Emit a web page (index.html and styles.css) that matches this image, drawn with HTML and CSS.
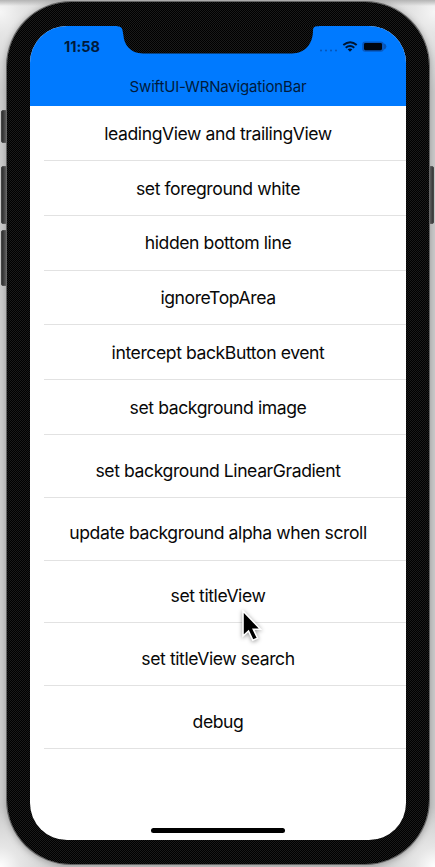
FILE: index.html
```html
<!DOCTYPE html>
<html lang="en">
<head>
<meta charset="utf-8">
<title>SwiftUI-WRNavigationBar</title>
<link rel="stylesheet" href="styles.css">
</head>
<body>
<i class="key mute"></i><i class="key up"></i><i class="key down"></i><i class="key power"></i>
<div class="phone">
  <main class="screen">
    <header class="nav">
      <div class="status">
        <span class="time">11:58</span>
        <svg class="signals" width="70" height="16" viewBox="0 0 70 16">
          <g fill="#0754b5"><circle cx="2" cy="12.5" r="1"/><circle cx="7" cy="12.5" r="1"/><circle cx="12" cy="12.5" r="1"/><circle cx="17" cy="12.5" r="1"/></g>
          <g fill="none" stroke="#001530" stroke-width="2"><path d="M24.3 7q7-5.6 13.4 0M26.7 9.7q4.3-3.4 8.6 0"/></g>
          <path fill="#001530" d="M28.6 11.3q2.4-1.6 4.8 0L31 13.8z"/>
          <rect x="43.2" y="3.4" width="21.6" height="10.4" rx="3" fill="#0758c0"/>
          <rect x="45" y="5" width="18" height="7.200" rx="1.4" fill="#000610"/>
          <path fill="#0754b5" d="M64.800 5.300q2.600.8 2.600 3.200t-2.600 3.200z"/>
        </svg>
      </div>
      <h1><span>SwiftUI-WRNavigationBar</span></h1>
      <svg class="notch" width="202" height="28" viewBox="0 0 202 28"><path fill="url(#mesh)" d="M0 0h202v.3h-2q-4 0-4 4C196 18 188 27.500 175 27.500H26C13 27.500 7 18 6.500 10Q6 7 5.500 4.300 5 .3 0 .3z"/><defs><pattern id="mesh" width="2" height="2" patternUnits="userSpaceOnUse"><path fill="#000" d="M0 0h2v2H0z"/><path fill="#1a1a1a" d="M0 0h1v1H0zM1 1h1v1H1z"/></pattern></defs></svg>
    </header>
    <ul class="list">
      <li>leadingView and trailingView</li>
      <li>set foreground white</li>
      <li>hidden bottom line</li>
      <li>ignoreTopArea</li>
      <li>intercept backButton event</li>
      <li>set background image</li>
      <li class="tall">set background LinearGradient</li>
      <li class="tall">update background alpha when scroll</li>
      <li class="tall">set titleView</li>
      <li class="tall">set titleView search</li>
      <li class="tall">debug</li>
    </ul>
    <div class="home"></div>
  </main>
</div>
<svg class="cursor" width="28" height="38" viewBox="0 0 28 38"><path d="M4 1v25l5.500-5 4.300 9.200 4.800-2-4.300-9h7.200z" fill="#000" stroke="#fff" stroke-width="1.600"/></svg>
</body>
</html>
```
FILE: styles.css
```css
* { box-sizing: border-box; }
body {
  margin: 0;
  width: 435px;
  height: 867px;
  overflow: hidden;
  position: relative;
  padding: 2px 6px 3px 7px;
  font-family: Inter, "Liberation Sans", sans-serif;
  background:
    linear-gradient(#b4b4b4, transparent 6px),
    radial-gradient(circle at 0 12px, #f6f6f6 0, #e6e6e6 20px, transparent 80px),
    radial-gradient(circle at 100% 12px, #f6f6f6 0, #e6e6e6 20px, transparent 80px),
    radial-gradient(circle at 0 100%, #fff 0, #e6e6e6 20px, transparent 60px),
    radial-gradient(circle at 100% 100%, #fff 0, #e6e6e6 20px, transparent 60px),
    #cacaca;
}
.phone {
  height: 862px;
  padding: 24px 23px;
  border-radius: 64px;
  background: repeating-conic-gradient(#1a1a1a 0 25%, #000 0 50%) 0 0 / 2px 2px;
  box-shadow: 0 0 0 1px #666, 0 1px 6px 1px #999;
  position: relative;
}
.screen {
  width: 376px;
  height: 814px;
  border-radius: 37px;
  overflow: hidden;
  background: #fff;
  display: flex;
  flex-direction: column;
}
.nav {
  flex: none;
  height: 80px;
  background: #007aff;
  position: relative;
}
.notch { position: absolute; left: 87px; top: 0; }
.status {
  height: 41px;
  padding: 0 17px 0 34px;
  display: flex;
  justify-content: space-between;
  align-items: center;
  color: #001a3c;
}
.time { font-size: 14.5px; font-weight: 700; letter-spacing: -.05px; }
.signals { margin-top: -1px; }
.nav h1 {
  margin: 0;
  font-size: 15px;
  line-height: 40px;
  font-weight: 400;
  text-align: center;
  color: #001a3c;
  letter-spacing: -.17px;
}
.list { flex: 1; margin: 0; padding: 0 0 0 14px; list-style: none; }
.list li {
  height: 54.85px;
  padding: .6px 14px 0 0;
  border-bottom: 1px solid #e2e2e2;
  display: flex;
  align-items: center;
  justify-content: center;
  font-size: 17.6px;
  letter-spacing: -.42px;
  color: #080808;
  white-space: nowrap;
}
.list .tall { height: 62.8px; padding-top: 8.3px; }
.home { flex: none; width: 134px; height: 5px; border-radius: 3px; background: #000; margin: 0 auto 7px 121px; }
.key { position: absolute; width: 7px; background: #242424; border: 1px solid #3b3b3b; border-radius: 2px 0 0 2px; }
.mute { left: 1px; top: 110px; height: 33px; }
.up { left: 1px; top: 166px; height: 58px; }
.down { left: 1px; top: 230px; height: 56px; }
.power { left: 428px; top: 166px; width: 6px; height: 58px; border-radius: 0 2px 2px 0; }
.cursor { position: absolute; left: 239px; top: 610px; filter: drop-shadow(0 1px 2px rgba(0,0,0,.4)); }
```
